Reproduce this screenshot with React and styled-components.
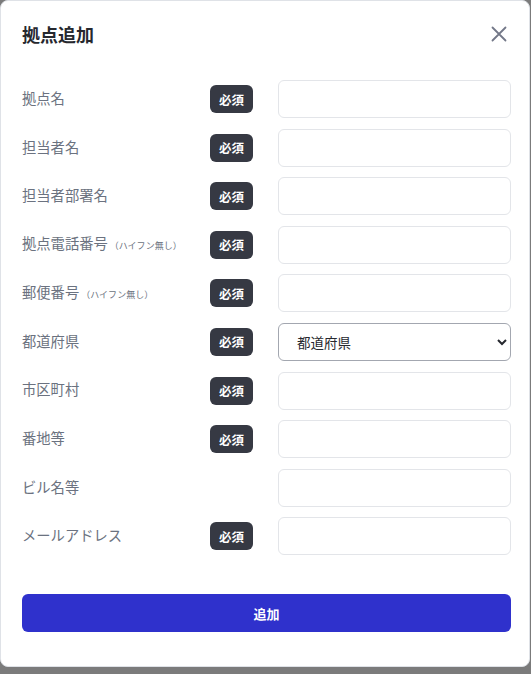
import React from "react";
import styled, { createGlobalStyle } from "styled-components";

const GlobalStyle = createGlobalStyle`
  html, body {
    margin: 0;
    padding: 0;
    background: #7b7b7b;
    font-family: "Noto Sans CJK JP", "Noto Sans", sans-serif;
  }
  * { box-sizing: border-box; }
`;

const FIELDS = [
  { label: "拠点名", required: true },
  { label: "担当者名", required: true },
  { label: "担当者部署名", required: true },
  { label: "拠点電話番号", note: "（ハイフン無し）", required: true },
  { label: "郵便番号", note: "（ハイフン無し）", required: true },
  { label: "都道府県", required: true, select: true },
  { label: "市区町村", required: true },
  { label: "番地等", required: true },
  { label: "ビル名等", required: false },
  { label: "メールアドレス", required: true },
];

export default function App() {
  return (
    <>
      <GlobalStyle />
      <Modal>
        <Header>
          <Title>拠点追加</Title>
          <CloseButton aria-label="閉じる">
            <svg width="16" height="16" viewBox="0 0 16 16" fill="none">
              <path d="M1.5 1.5L14.5 14.5M14.5 1.5L1.5 14.5" stroke="#737888" strokeWidth="1.8" strokeLinecap="round" />
            </svg>
          </CloseButton>
        </Header>

        <Form>
          {FIELDS.map((f) => (
            <Row key={f.label}>
              <Label>
                {f.label}
                {f.note && <Note>{f.note}</Note>}
              </Label>
              <BadgeCell>{f.required && <Badge>必須</Badge>}</BadgeCell>
              {f.select ? (
                <Select defaultValue="">
                  <option value="">都道府県</option>
                </Select>
              ) : (
                <Input type="text" />
              )}
            </Row>
          ))}
        </Form>

        <SubmitButton type="button">追加</SubmitButton>
      </Modal>
    </>
  );
}

const Modal = styled.div`
  width: 530px;
  height: 667px;
  background: #ffffff;
  border: 1px solid #dfe2e7;
  border-radius: 8px;
  padding: 0 18px 0 21px;
  display: flex;
  flex-direction: column;
`;

const Header = styled.div`
  display: flex;
  align-items: center;
  justify-content: space-between;
  height: 68px;
  padding-bottom: 2px;
`;

const Title = styled.h2`
  margin: 0;
  font-size: 18px;
  font-weight: 700;
  color: #26282e;
`;

const CloseButton = styled.button`
  border: none;
  background: none;
  padding: 0;
  margin-right: 4px;
  display: flex;
  cursor: pointer;
`;

const Form = styled.div`
  display: flex;
  flex-direction: column;
  gap: 10.6px;
  margin-top: 11px;
`;

const Row = styled.div`
  display: grid;
  grid-template-columns: minmax(0, 1fr) 43px 233px;
  column-gap: 25px;
  align-items: center;
  height: 38px;
`;

const Label = styled.div`
  font-size: 14.3px;
  line-height: 1.2;
  color: #6b7280;
  white-space: nowrap;
  display: flex;
  align-items: baseline;
  margin-top: -3px;
`;

const Note = styled.span`
  font-size: 9px;
  margin-left: 2px;
`;

const BadgeCell = styled.div`
  display: flex;
`;

const Badge = styled.span`
  width: 43px;
  height: 28px;
  border-radius: 6px;
  background: #363943;
  color: #ffffff;
  font-size: 12.5px;
  font-weight: 700;
  display: flex;
  align-items: center;
  justify-content: center;
`;

const Input = styled.input`
  width: 100%;
  height: 38px;
  border: 1px solid #e3e5e9;
  border-radius: 6px;
  background: #ffffff;
  padding: 0 12px;
  font-family: inherit;
  font-size: 14px;
  outline: none;
`;

const Select = styled.select`
  width: 100%;
  height: 38px;
  border: 1px solid #a3a7b0;
  border-radius: 6px;
  background: #ffffff;
  padding: 0 6px 0 14px;
  font-family: inherit;
  font-size: 13.5px;
  color: #26282e;
  outline: none;
`;

const SubmitButton = styled.button`
  margin-top: 39px;
  width: 100%;
  height: 38px;
  border: none;
  border-radius: 6px;
  background: #2f31cc;
  color: #ffffff;
  font-family: inherit;
  font-size: 13px;
  font-weight: 700;
  cursor: pointer;
`;
